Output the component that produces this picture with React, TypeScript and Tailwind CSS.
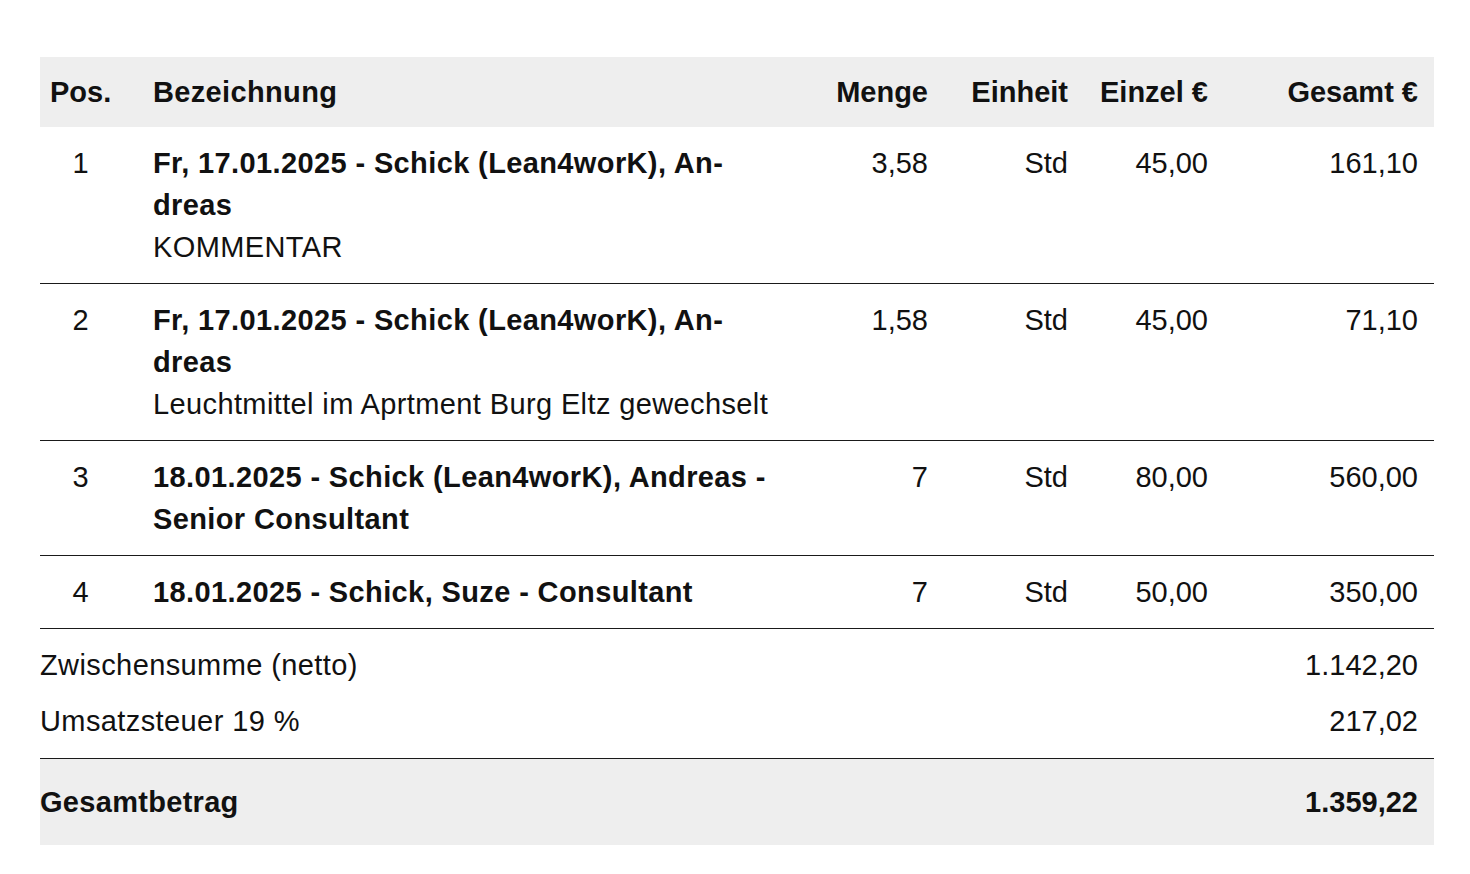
type Position = {
  pos: number;
  lines: string[];
  comment?: string;
  menge: string;
  einheit: string;
  einzel: string;
  gesamt: string;
};

const positions: Position[] = [
  {
    pos: 1,
    lines: ["Fr, 17.01.2025 - Schick (Lean4worK), An-", "dreas"],
    comment: "KOMMENTAR",
    menge: "3,58",
    einheit: "Std",
    einzel: "45,00",
    gesamt: "161,10",
  },
  {
    pos: 2,
    lines: ["Fr, 17.01.2025 - Schick (Lean4worK), An-", "dreas"],
    comment: "Leuchtmittel im Aprtment Burg Eltz gewechselt",
    menge: "1,58",
    einheit: "Std",
    einzel: "45,00",
    gesamt: "71,10",
  },
  {
    pos: 3,
    lines: ["18.01.2025 - Schick (Lean4worK), Andreas -", "Senior Consultant"],
    menge: "7",
    einheit: "Std",
    einzel: "80,00",
    gesamt: "560,00",
  },
  {
    pos: 4,
    lines: ["18.01.2025 - Schick, Suze - Consultant"],
    menge: "7",
    einheit: "Std",
    einzel: "50,00",
    gesamt: "350,00",
  },
];

const cols = "grid grid-cols-[97px_666px_141px_140px_140px_210px]";

const App = () => {
  return (
    <div className="min-h-screen bg-white pt-[57px] pl-[40px] pr-[36px] font-['Liberation_Sans',Arial,sans-serif] text-[29px] leading-[42px] text-[#111]">
      {/* Kopfzeile */}
      <div className={`${cols} bg-[#eeeeee] py-[14px] font-bold`}>
        <div className="pl-[10px] pr-[26px] text-center">Pos.</div>
        <div className="pl-4 tracking-[0.35px]">Bezeichnung</div>
        <div className="pr-4 text-right">Menge</div>
        <div className="pr-4 text-right">Einheit</div>
        <div className="pr-4 text-right">Einzel €</div>
        <div className="pr-4 text-right">Gesamt €</div>
      </div>

      {/* Positionen */}
      {positions.map((p) => (
        <div key={p.pos} className={`${cols} border-b border-[#1a1a1a] py-[15px]`}>
          <div className="pl-[10px] pr-[26px] text-center">{p.pos}</div>
          <div className="pl-4 tracking-[0.38px]">
            {p.lines.map((l, i) => (
              <div key={i} className="font-bold whitespace-nowrap">
                {l}
              </div>
            ))}
            {p.comment && <div className="whitespace-nowrap">{p.comment}</div>}
          </div>
          <div className="pr-4 text-right">{p.menge}</div>
          <div className="pr-4 text-right">{p.einheit}</div>
          <div className="pr-4 text-right">{p.einzel}</div>
          <div className="pr-4 text-right">{p.gesamt}</div>
        </div>
      ))}

      {/* Summen */}
      <div className="flex flex-col gap-[14px] border-b border-[#1a1a1a] pt-[15px] pb-[16px]">
        <div className="flex justify-between pr-4">
          <span className="tracking-[0.4px]">Zwischensumme (netto)</span>
          <span>1.142,20</span>
        </div>
        <div className="flex justify-between pr-4">
          <span className="tracking-[0.4px]">Umsatzsteuer 19 %</span>
          <span>217,02</span>
        </div>
      </div>
      <div className="flex justify-between bg-[#eeeeee] py-[22px] pr-4 font-bold">
        <span className="tracking-[0.3px]">Gesamtbetrag</span>
        <span>1.359,22</span>
      </div>
    </div>
  );
};

export default App;
